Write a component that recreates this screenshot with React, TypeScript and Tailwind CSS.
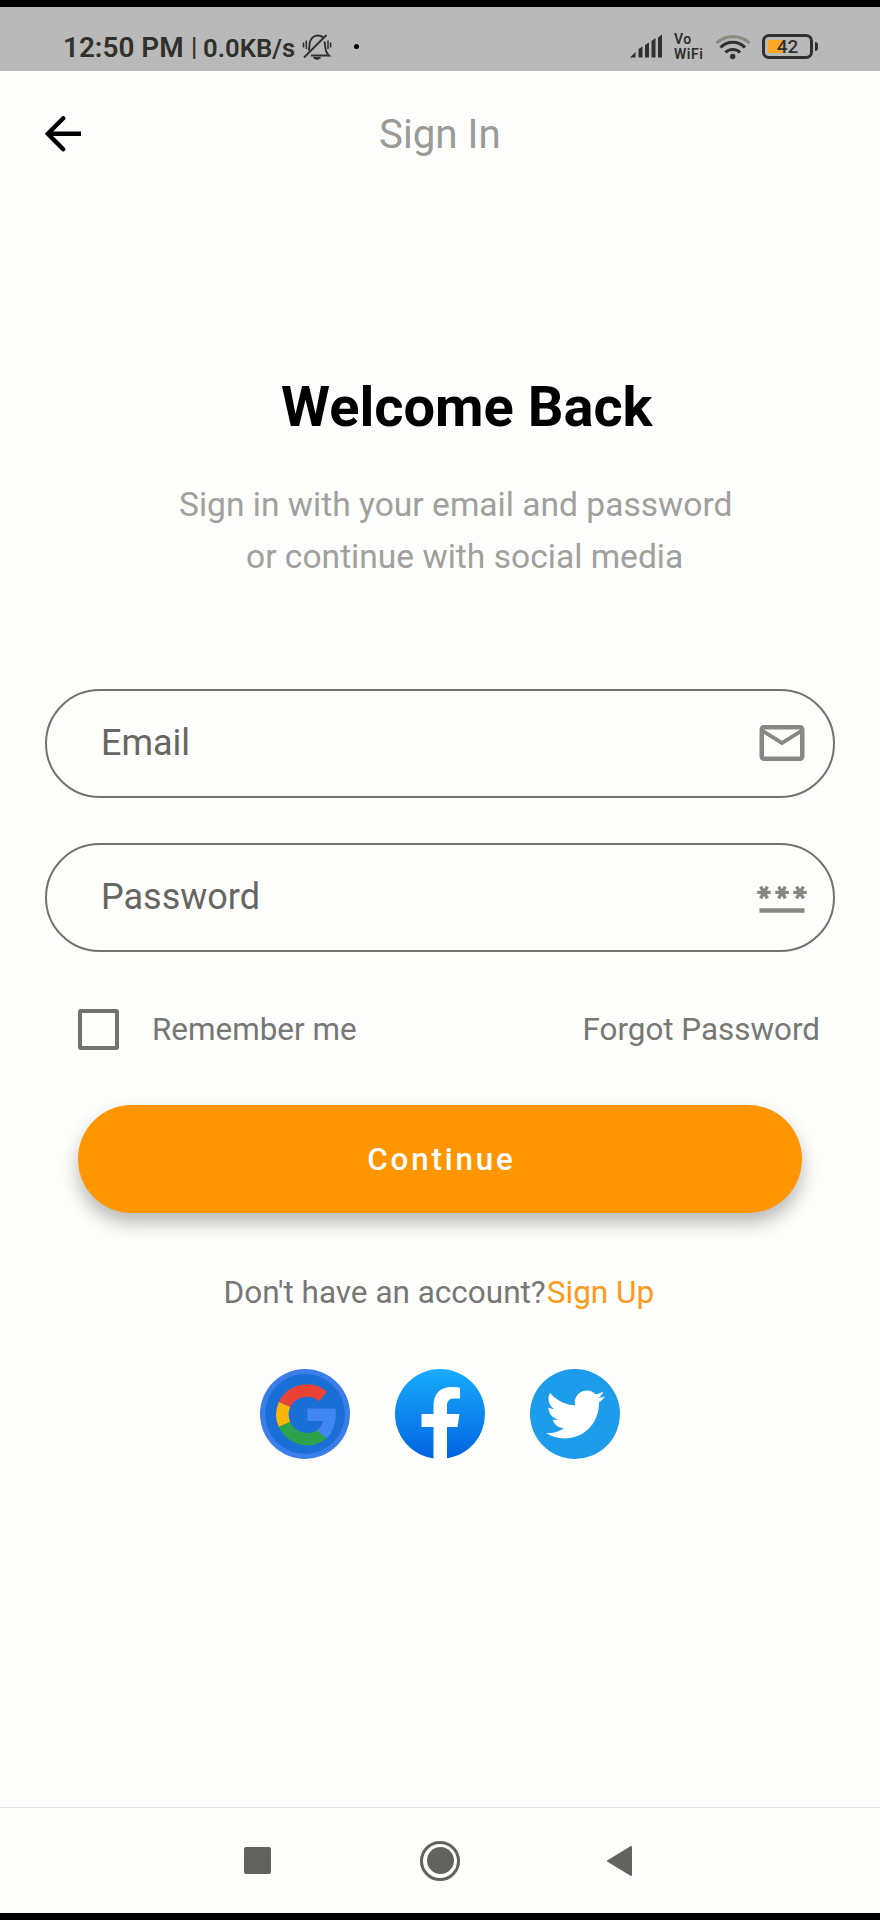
import { MdMailOutline, MdPassword } from "react-icons/md";
import { FaTwitter } from "react-icons/fa";

function StatusBar() {
  return (
    <header className="flex h-[64px] items-start bg-[#b9b9b9] pl-[63px] text-[#30302c]">
      <div className="flex h-[40px] w-[233px] shrink-0 items-center whitespace-nowrap">
        <span className="mt-[41px] w-[128px] text-[27.900px] leading-[38px] font-semibold">12:50 PM</span>
        <span className="mt-[40px] w-[12px] text-[25.500px] leading-[38px] font-medium">|</span>
        <span className="mt-[41px] text-[25.700px] leading-[38px] font-semibold">0.0KB/s</span>
      </div>
      <svg className="mt-[26px] ml-[6px] h-[28px] w-[30px] shrink-0" viewBox="0 0 30 28" fill="none" stroke="currentColor" strokeWidth="1.9">
        <path d="M2 24.500 24.500 2" />
        <path d="M6.500 17.500C8 14.500 7 11.500 8 8.500 9.500 4.500 12.500 2.500 16 2.500c2 0 4 .8 5.200 2M22.500 8.500c1.300 4-.5 9.500 4.500 14H9" />
        <path d="M11.500 24.800h7l-3.500 1.500Z" strokeWidth="1.500" fill="currentColor" />
        <path d="M1.500 9.500v5M4.300 7.500v8.500M26 7.500v8.500M28.600 9.500v5" strokeWidth="1.500" />
      </svg>
      <span className="mt-[37px] ml-[22px] size-[5px] shrink-0 rounded-full bg-black" />
      <svg className="mt-[27px] ml-[270px] h-[24px] w-[34px] shrink-0" viewBox="0 0 34 24" fill="currentColor">
        <path d="M1 23.500 6.500 18v5.500ZM9.500 15l4-2.500v11h-4ZM16 11l4-2.500v15h-4ZM22.500 7l4-3v19.500h-4ZM29 3.500 33 .5v23h-4Z" />
      </svg>
      <div className="mt-[25px] ml-[11px] flex h-[30px] w-[30px] shrink-0 flex-col text-[14px] leading-[15px] font-semibold tracking-[0.5px]">
        <span>Vo</span>
        <span>WiFi</span>
      </div>
      <svg className="mt-[27px] ml-[11px] h-[26px] w-[36px] shrink-0" viewBox="0 0 36 26" fill="none" stroke="currentColor" strokeWidth="3.200">
        <path d="M1.500 9C11 .5 25 .5 34.500 9" stroke="#8b8b84" />
        <path d="M5.500 13.500C12 6.500 23.500 6.500 30 13.500M10.500 18.500C14 14.500 21.500 14.500 25 18.500" />
        <circle cx="17.700" cy="22.500" r="2.700" fill="currentColor" stroke="none" />
      </svg>
      <div className="mt-[27px] ml-[11px] flex shrink-0 items-center gap-[2px]">
        <div className="relative flex h-[25px] w-[51px] items-center justify-center rounded-[7px] border-3 border-current p-[3px]">
          <span className="absolute top-[3px] left-[3px] h-[13px] w-[17px] bg-[#f9a825]" />
          <span className="relative text-[19px] leading-[19px] font-medium">42</span>
        </div>
        <span className="h-[9px] w-[3px] rounded-r-sm bg-current" />
      </div>
    </header>
  );
}

function AppBar() {
  return (
    <div className="flex h-[125px] items-center pl-[45px]">
      <svg className="h-[36px] w-[36px]" viewBox="0 0 36 36" fill="none" stroke="#000" strokeWidth="4.400">
        <path d="M36 17.800H3" />
        <path d="M18.200 2.300 2.800 17.800 18.200 33.300" strokeLinecap="round" />
      </svg>
      <h1 className="mt-[2px] ml-[298px] text-[40.300px] leading-[48px] text-[#9a9a97]">Sign In</h1>
    </div>
  );
}

function GoogleLogo() {
  return (
    <svg className="size-[90px]" viewBox="0 0 90 90" fill="none">
      <circle cx="45" cy="45" r="45" fill="#3b7de9" />
      <circle cx="45" cy="45" r="40" fill="#1a6fd6" />
      <g strokeWidth="12.500">
        <path d="M24.500 35.500A25 25 0 0 1 63 27.500" stroke="#ea4335" />
        <path d="M24.500 55.500A24.500 24.500 0 0 1 24.500 35.500" stroke="#fbb605" />
        <path d="M63 64.500A25 25 0 0 1 24.500 55.500" stroke="#2ba24c" />
      </g>
      <path d="M47.500 39.500H75.500C77 51 74 62 66.500 69.500L57 61.500C60 59 62 56 63 52H47.500Z" fill="#4285f4" />
    </svg>
  );
}

function FacebookLogo() {
  return (
    <svg className="size-[90px]" viewBox="0 0 90 90">
      <defs>
        <linearGradient id="fb" x1="0" y1="0" x2="0" y2="1">
          <stop offset="0" stopColor="#18acfe" />
          <stop offset="1" stopColor="#0163e0" />
        </linearGradient>
      </defs>
      <circle cx="45" cy="45" r="45" fill="url(#fb)" />
      <path d="M38.500 90V58H26.500V45H38.500V37C38.500 24 46 18 56.500 18 60 18 65 18.700 65 18.700V29.500H59C53.500 29.500 52 33 52 36.500V45H64.500L62.500 58H52V90Z" fill="#fff" />
    </svg>
  );
}

function TwitterLogo() {
  return (
    <div className="flex size-[90px] items-center justify-center rounded-full bg-[#1c9cea] text-white">
      <FaTwitter size={59} />
    </div>
  );
}

function Field({ label, children }: { label: string; children: React.ReactNode }) {
  return (
    <label className="flex h-[109px] items-center justify-between rounded-full border-2 border-[#72726e] pr-[24px] pb-[2px] pl-[54px] text-[36px] text-[#666662]">
      <span>{label}</span>
      <span className="text-[#888883]">{children}</span>
    </label>
  );
}

export default function App() {
  return (
    <div className="flex h-[1920px] w-[880px] flex-col overflow-hidden border-y-7 border-black bg-[#fdfdfc] font-['Roboto',sans-serif]">
      <StatusBar />
      <AppBar />
      <main className="flex flex-1 flex-col">
        <h2 className="mt-[178px] pl-[281px] text-[56px] leading-[66px] font-bold whitespace-nowrap text-black">Welcome Back</h2>
        <div className="mt-[39px] text-[33.600px] leading-[52px] whitespace-nowrap text-[#a0a09c]">
          <p className="pl-[179px]">Sign in with your email and password</p>
          <p className="pl-[246px]">or continue with social media</p>
        </div>
        <div className="mt-[106px] flex flex-col gap-[45px] px-[45px]">
          <Field label="Email"><MdMailOutline size={54} /></Field>
          <Field label="Password"><MdPassword size={54} /></Field>
        </div>
        <div className="mt-[56px] flex h-[42px] items-center pl-[78px] text-[31.400px] whitespace-nowrap text-[#777775]">
          <span className="size-[41px] rounded-[3px] border-4 border-[#72726f]" />
          <span className="mt-[2px] ml-[33px]">Remember me</span>
          <span className="mt-[2px] mr-[60px] ml-auto">Forgot Password</span>
        </div>
        <button className="mx-[78px] mt-[55px] h-[108px] rounded-full bg-[#ff9500] pt-[1px] pl-[3px] text-[31.400px] font-medium tracking-[2.800px] text-white shadow-[0_10px_18px_rgba(0,0,0,0.27)]">Continue</button>
        <p className="mt-[59px] flex h-[42px] items-center pl-[223.500px] text-[31.500px] whitespace-nowrap text-[#777775]">
          Don't have an account?<a className="ml-px text-[#fb9a1a]">Sign Up</a>
        </p>
        <div className="mt-[55px] flex justify-center gap-[45px]">
          <GoogleLogo />
          <FacebookLogo />
          <TwitterLogo />
        </div>
      </main>
      <nav className="flex h-[106px] items-center border-t border-[#e2e2ea] pl-[244px] text-[#62625f]">
        <span className="size-[27px] rounded-xs bg-current" />
        <span className="ml-[149px] flex size-[40px] items-center justify-center rounded-full border-3 border-current">
          <span className="size-[27px] rounded-full bg-current" />
        </span>
        <svg className="ml-[147px] h-[30px] w-[25px]" viewBox="0 0 25 30" fill="currentColor" stroke="currentColor" strokeWidth="2" strokeLinejoin="round">
          <path d="M1 15 24 1V29Z" />
        </svg>
      </nav>
    </div>
  );
}
